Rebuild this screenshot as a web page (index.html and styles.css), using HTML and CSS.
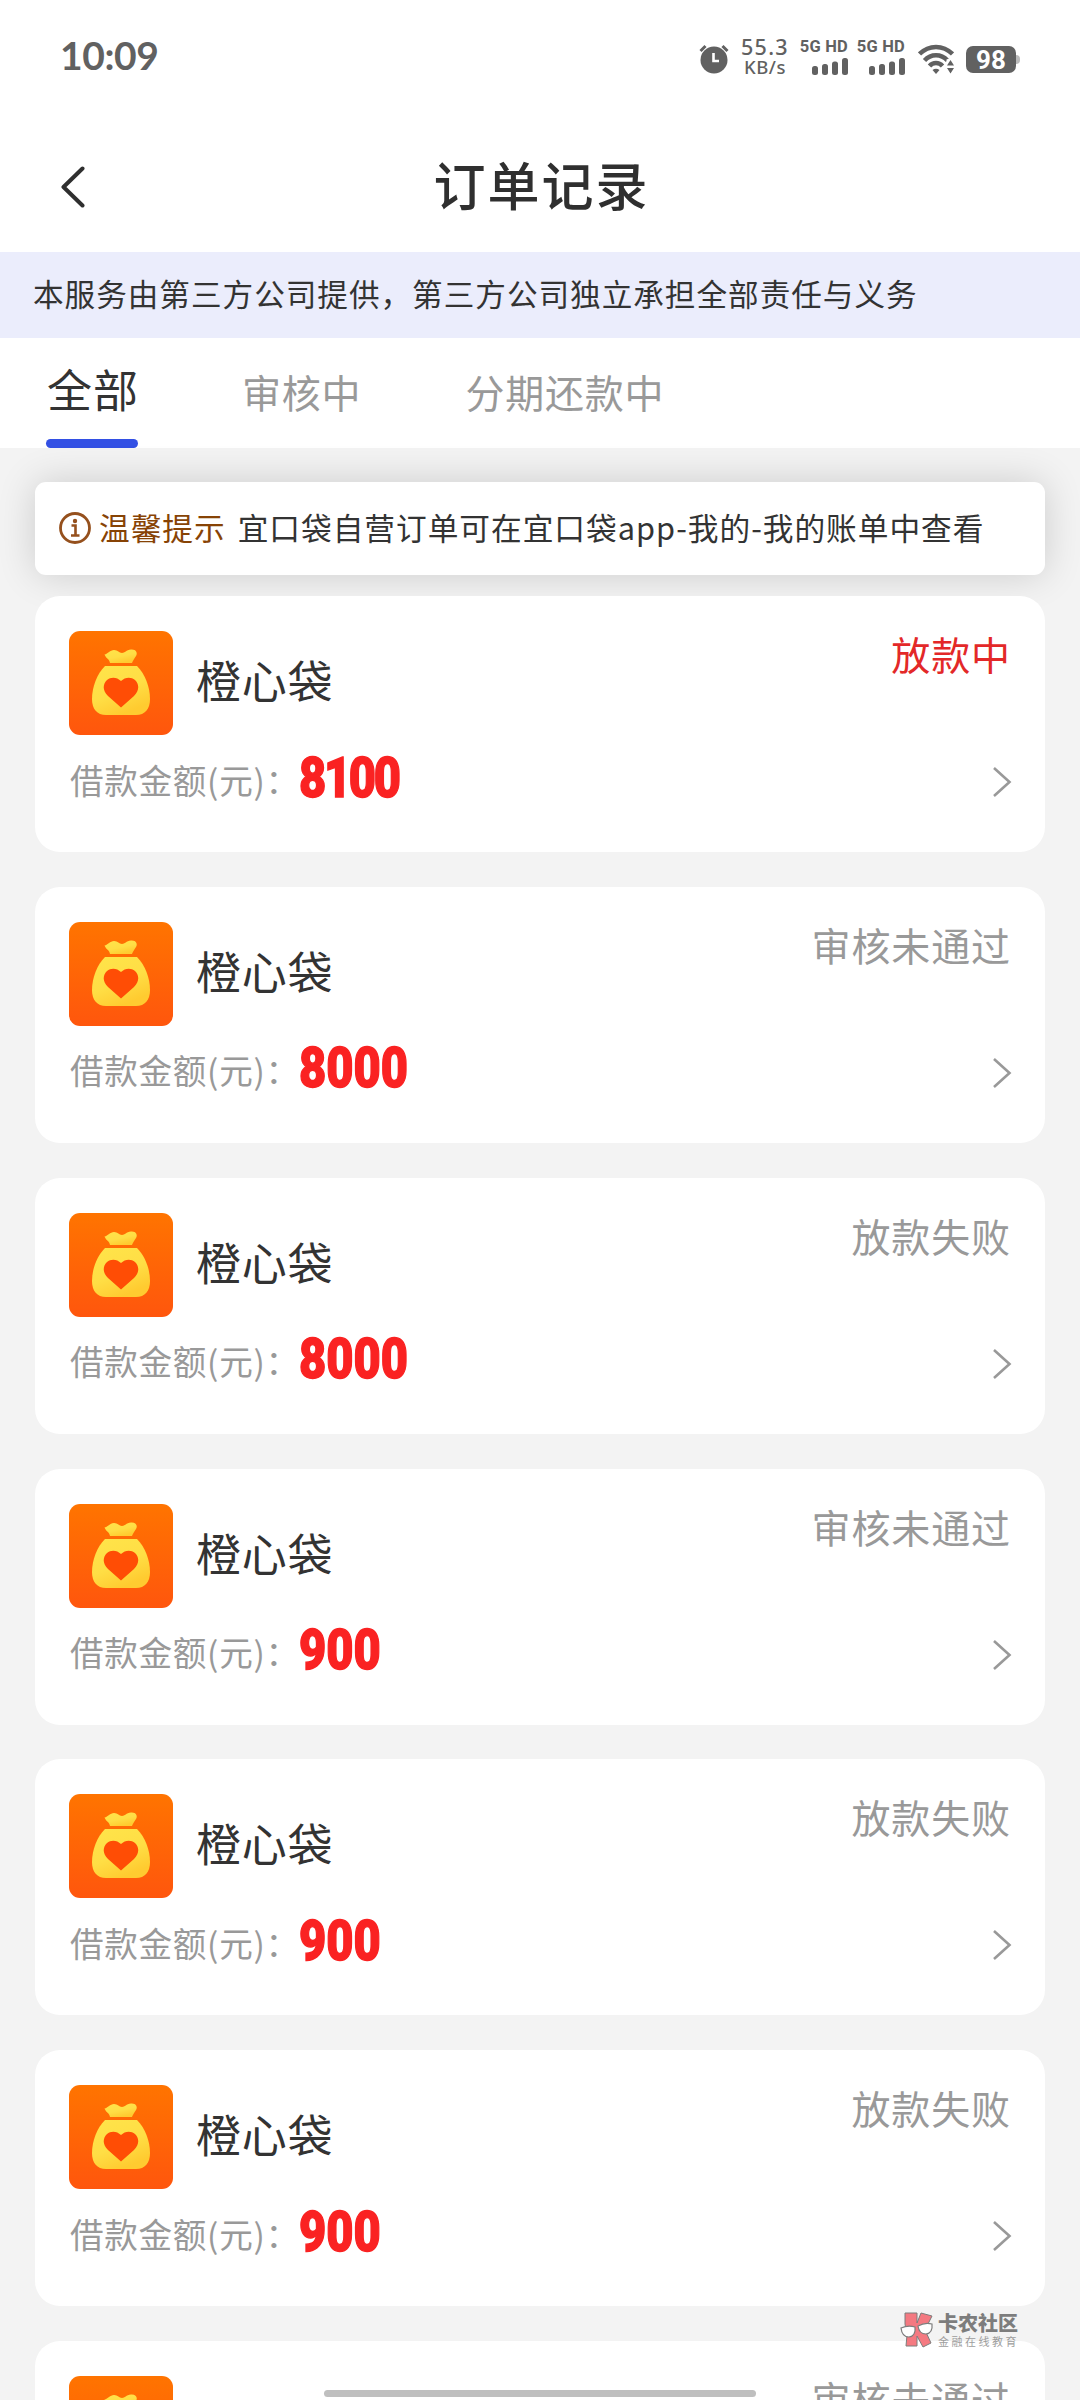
FILE: index.html
```html
<!DOCTYPE html>
<html lang="zh-CN">
<head>
<meta charset="utf-8">
<title>订单记录</title>
<link rel="stylesheet" href="styles.css">
</head>
<body>
<svg width="0" height="0" class="defs" aria-hidden="true">
  <defs>
    <linearGradient id="orange" x1="0" y1="0" x2="0" y2="1"><stop offset="0" stop-color="#ff7400"/><stop offset="1" stop-color="#ff560d"/></linearGradient>
    <linearGradient id="gold" x1="0" y1="0" x2=".5" y2="1"><stop offset="0" stop-color="#ffe44a"/><stop offset=".6" stop-color="#ffde45"/><stop offset="1" stop-color="#ffcb30"/></linearGradient>
    <symbol id="bag" viewBox="0 0 104 104">
      <rect width="104" height="104" rx="11" fill="url(#orange)"/>
      <path d="M35.500 23.500C39 23 41 19 45 19C49 19 50 22 53 22C56 22 57 19 62 18.500C67 18 69 22 67 25C65 28 64 29.500 63 32H41C40.500 28 37 27.500 35.500 23.500Z" fill="url(#gold)"/>
      <path d="M36 35H68C76 43 81 56 81 68C81 78 76 84 67 84H37C28 84 23 78 23 68C23 56 28 43 36 35Z" fill="url(#gold)"/>
      <path d="M52 76.500L39 65C33 59 34 53 38 49C42 45.500 48 46 52 50C56 46 62 45.500 66 49C70 53 71 59 65 65Z" fill="#ff4d05"/>
    </symbol>
    <symbol id="next" viewBox="0 0 20 32"><path d="M2 2L17.500 16L2 30" fill="none" stroke="#999" stroke-width="2.600"/></symbol>
    <symbol id="signal" viewBox="0 0 36 17"><rect y="8" width="6" height="9" rx="2.500"/><rect x="10" y="6" width="6" height="11" rx="2.500"/><rect x="20" y="3.500" width="6" height="13.500" rx="2.500"/><rect x="30" width="6" height="17" rx="2.500"/></symbol>
  </defs>
</svg>

<div class="screen">
  <header class="status-bar">
    <span class="clock">10:09</span>
    <div class="indicators">
      <svg class="alarm" viewBox="0 0 30 30"><circle cx="15" cy="16" r="13.500" fill="#616161"/><path d="M1.500 7L6.500 2M23.500 2L28.500 7" stroke="#616161" stroke-width="3" fill="none"/><path d="M14.500 9V17H20" stroke="#fff" stroke-width="2.600" fill="none"/></svg>
      <div class="speed"><span class="speed-value">55.3</span><span class="speed-unit">KB/s</span></div>
      <div class="sim"><span>5G HD</span><svg><use href="#signal"/></svg></div>
      <div class="sim sim-second"><span>5G HD</span><svg><use href="#signal"/></svg></div>
      <svg class="wifi" viewBox="0 0 36 30"><path d="M1.500 10C11 .5 25 .5 34.500 10" stroke="#616161" stroke-width="4.500" fill="none"/><path d="M6.500 16.500C13 9.500 23 9.500 29.500 16.500" stroke="#616161" stroke-width="4.500" fill="none"/><path d="M11.500 22C15 18 21 18 24.500 22" stroke="#616161" stroke-width="4.500" fill="none"/><path d="M14.500 26Q18 23.500 21.500 26L18 30Z" fill="#616161"/><path d="M28.500 15.500L32.500 14L36 17V30H28.500Z" fill="#fff"/><path d="M32.500 16L36 21.500H29ZM29 24H36L32.500 29.500Z" fill="#616161"/></svg>
      <div class="battery"><span>98</span></div>
    </div>
  </header>

  <nav class="title-bar">
    <svg class="back" viewBox="0 0 24 42"><path d="M21.500 2.500L2.500 21L21.500 39.500" fill="none" stroke="#2f2f2f" stroke-width="4" stroke-linecap="round" stroke-linejoin="round"/></svg>
    <h1>订单记录</h1>
  </nav>

  <p class="notice">本服务由第三方公司提供，第三方公司独立承担全部责任与义务</p>

  <div class="tabs">
    <span class="tab tab-active">全部</span>
    <span class="tab">审核中</span>
    <span class="tab">分期还款中</span>
  </div>

  <main class="content">
    <div class="tip">
      <svg viewBox="0 0 32 32"><circle cx="16" cy="16" r="14.500" fill="none" stroke="#95501d" stroke-width="2.800"/><circle cx="16" cy="9" r="2.200" fill="#95501d"/><path d="M12.500 13.500H16.500V23.500M12 23.500H20.500" fill="none" stroke="#95501d" stroke-width="2.600"/></svg>
      <span class="tip-label">温馨提示</span>
      <span class="tip-text">宜口袋自营订单可在宜口袋app-我的-我的账单中查看</span>
    </div>

    <section class="orders">
      <article class="order">
        <div class="order-head"><svg class="logo"><use href="#bag"/></svg><span class="name">橙心袋</span><span class="state state-active">放款中</span></div>
        <div class="order-body"><span class="label">借款金额(元)：</span><span class="amount amount-tight">8100</span><svg class="next"><use href="#next"/></svg></div>
      </article>
      <article class="order">
        <div class="order-head"><svg class="logo"><use href="#bag"/></svg><span class="name">橙心袋</span><span class="state">审核未通过</span></div>
        <div class="order-body"><span class="label">借款金额(元)：</span><span class="amount">8000</span><svg class="next"><use href="#next"/></svg></div>
      </article>
      <article class="order">
        <div class="order-head"><svg class="logo"><use href="#bag"/></svg><span class="name">橙心袋</span><span class="state">放款失败</span></div>
        <div class="order-body"><span class="label">借款金额(元)：</span><span class="amount">8000</span><svg class="next"><use href="#next"/></svg></div>
      </article>
      <article class="order">
        <div class="order-head"><svg class="logo"><use href="#bag"/></svg><span class="name">橙心袋</span><span class="state">审核未通过</span></div>
        <div class="order-body"><span class="label">借款金额(元)：</span><span class="amount">900</span><svg class="next"><use href="#next"/></svg></div>
      </article>
      <article class="order">
        <div class="order-head"><svg class="logo"><use href="#bag"/></svg><span class="name">橙心袋</span><span class="state">放款失败</span></div>
        <div class="order-body"><span class="label">借款金额(元)：</span><span class="amount">900</span><svg class="next"><use href="#next"/></svg></div>
      </article>
      <article class="order">
        <div class="order-head"><svg class="logo"><use href="#bag"/></svg><span class="name">橙心袋</span><span class="state">放款失败</span></div>
        <div class="order-body"><span class="label">借款金额(元)：</span><span class="amount">900</span><svg class="next"><use href="#next"/></svg></div>
      </article>
      <article class="order">
        <div class="order-head"><svg class="logo"><use href="#bag"/></svg><span class="state">审核未通过</span></div>
      </article>
    </section>
  </main>

  <div class="watermark">
    <svg viewBox="0 0 34 36"><path d="M5 1H17V11L21 1L32 4L25 18L31 31L23 35L17 24V34H6L7 23L5 12Z" fill="#f5737b" stroke="#777" stroke-width="1"/><path d="M1 16Q8 13 15 15Q16 24 9 25Q2 25 1 16ZM18 14Q25 10 32 12Q33 21 26 22Q19 22 18 14Z" fill="#fff" stroke="#777" stroke-width="1.200"/></svg>
    <div class="watermark-text"><b>卡农社区</b><span>金融在线教育</span></div>
  </div>
  <div class="home-indicator"></div>
</div>
</body>
</html>
```
FILE: styles.css
```css
* { box-sizing: border-box; }
body { margin: 0; background: #fff; font-family: "Noto Sans CJK SC", sans-serif; color: #333; }
.defs { position: absolute; }
svg { display: block; flex: none; }
h1, p { margin: 0; }
.screen { position: relative; display: flex; flex-direction: column; width: 1080px; height: 2400px; overflow: hidden; background: #f3f3f3; }

.status-bar { flex: none; display: flex; justify-content: space-between; height: 110px; padding: 0 60px 0 60px; background: #fff; color: #616161; }
.clock { margin-top: 30px; font: 700 39px/50px Lato, sans-serif; letter-spacing: -.4px; }
.indicators { display: flex; align-items: flex-start; }
.alarm { width: 30px; height: 30px; margin: 44px 12px 0 0; }
.speed { display: flex; flex-direction: column; align-items: center; width: 48px; margin: 35px 11px 0 0; font-family: "Noto Sans", sans-serif; font-weight: 500; }
.speed-value { font-size: 21.500px; line-height: 23px; letter-spacing: 1.300px; }
.speed-unit { font-size: 18.500px; line-height: 17px; letter-spacing: .5px; }
.sim { display: flex; flex-direction: column; align-items: flex-end; width: 48px; margin-top: 38px; font: 700 16.500px/18px Roboto, sans-serif; letter-spacing: .2px; white-space: nowrap; }
.sim svg { width: 36px; height: 17px; margin-top: 2px; fill: #616161; }
.sim-second { margin-left: 9px; }
.wifi { width: 36px; height: 30px; margin: 44px 0 0 13px; }
.battery { position: relative; width: 50px; height: 27px; margin: 46px 4px 0 12px; border-radius: 7px; background: #616161; color: #fff; font: 700 26px/28px Roboto, sans-serif; text-align: center; }
.battery::after { content: ""; position: absolute; right: -4px; top: 9px; width: 4px; height: 9px; border-radius: 0 4px 4px 0; background: #bbb; }

.title-bar { flex: none; display: grid; grid-template-columns: 90px 1fr 90px; align-items: center; height: 142px; padding-top: 12px; background: #fff; }
.back { width: 24px; height: 42px; margin-left: 61px; }
h1 { padding-bottom: 7px; text-align: center; font-size: 52px; line-height: 80px; font-weight: 500; letter-spacing: 2px; text-indent: 3px; color: #2f2f2f; }

.notice { flex: none; height: 86px; padding-left: 33px; background: #ebedfc; font-size: 30.600px; line-height: 83px; letter-spacing: 1px; color: #333; }

.tabs { flex: none; display: flex; gap: 104px; height: 110px; padding-left: 46px; background: #fff; }
.tab { font-size: 39px; line-height: 107px; letter-spacing: .8px; color: #999; }
.tab-active { display: flex; flex-direction: column; width: 92px; padding-left: 1px; font-size: 45px; line-height: 101px; letter-spacing: 1px; color: #333; white-space: nowrap; }
.tab-active::after { content: ""; height: 9px; margin-left: -1px; border-radius: 4.500px; background: #3350e4; }

.content { padding: 34px 35px 0; }
.tip { display: flex; align-items: center; height: 93px; padding-left: 24px; border-radius: 11px; background: #fff; box-shadow: 0 0 38px rgba(0, 0, 0, .16); font-size: 30.700px; letter-spacing: .98px; line-height: 50px; white-space: nowrap; }
.tip svg { width: 32px; height: 32px; margin: 0 8px 2px 0; }
.tip span { padding-bottom: 4px; }
.tip-label { margin-right: 12px; color: #874305; }

.orders { display: flex; flex-direction: column; gap: 34.850px; margin-top: 21px; }
.order { height: 256px; padding: 35px 34px 0 34px; border-radius: 25px; background: #fff; }
.order-head { display: flex; height: 104px; }
.logo { width: 104px; height: 104px; }
.name { margin-left: 23px; font-size: 45px; line-height: 98px; letter-spacing: .8px; }
.state { margin-left: auto; font-size: 39px; line-height: 44px; letter-spacing: .9px; color: #999; }
.state-active { color: #e32828; }
.order-body { display: flex; align-items: center; height: 70px; margin-top: 12px; }
.label { width: 230px; margin-top: -5px; padding-left: 1px; font-size: 33.600px; line-height: 60px; letter-spacing: .7px; color: #999; white-space: nowrap; }
.amount { margin-top: -9px; font: 900 56px/60px Roboto, sans-serif; color: #fa2222; -webkit-text-stroke: 1.400px #fa2222; transform: scaleX(.84); transform-origin: left; }
.amount-tight { letter-spacing: -2.800px; }
.next { width: 20px; height: 32px; margin: 0 -1px 0 auto; }

.watermark { position: absolute; left: 900px; top: 2312px; display: flex; gap: 4px; opacity: .95; }
.watermark svg { width: 34px; height: 36px; }
.watermark-text { display: flex; flex-direction: column; white-space: nowrap; color: #777; }
.watermark-text b { font-size: 20px; line-height: 22px; font-weight: 900; }
.watermark-text span { font-size: 11px; line-height: 14px; letter-spacing: 2.500px; color: #999; }
.home-indicator { position: absolute; left: 324px; top: 2390px; width: 432px; height: 7px; border-radius: 4px; background: #bfbfbf; }
```
